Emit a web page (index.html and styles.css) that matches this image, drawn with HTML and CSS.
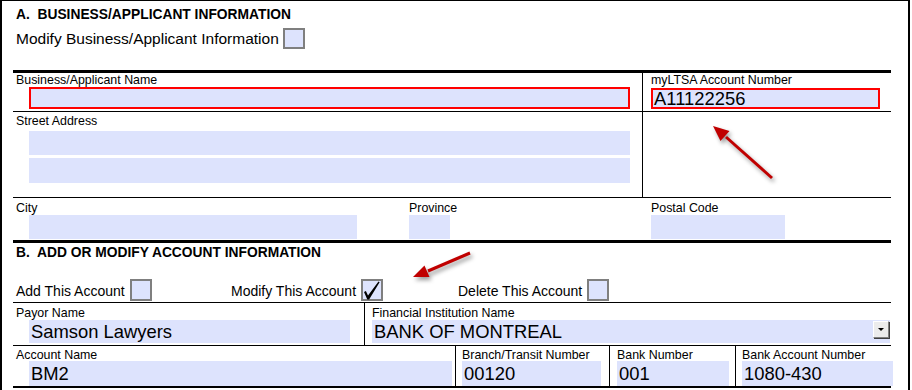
FILE: index.html
```html
<!DOCTYPE html>
<html lang="en">
<head>
    <meta charset="UTF-8">
    <meta name="viewport" content="width=device-width, initial-scale=1.0">
    <title>Account Information Form</title>
    <link rel="stylesheet" href="styles.css">
</head>
<body>

    <div class="frame">

        <!-- Section A -->
        <div class="sec-title">A.&nbsp; BUSINESS/APPLICANT INFORMATION</div>
        <div class="modify-line">
            <span>Modify Business/Applicant Information</span>
            <span class="box"></span>
        </div>

        <div class="row row-a1">
            <div class="cell cell-first div">
                <div class="lbl">Business/Applicant Name</div>
                <div class="fld req f-bizname"></div>
            </div>
            <div class="cell cell-ltsa">
                <div class="lbl">myLTSA Account Number</div>
                <div class="fld req f-ltsa">A11122256</div>
            </div>
        </div>

        <div class="row row-a2">
            <div class="cell cell-first div">
                <div class="lbl">Street Address</div>
                <div class="fld f-street1"></div>
                <div class="fld f-street2"></div>
            </div>
            <div class="cell"></div>
        </div>

        <div class="row row-a3">
            <div class="cell cell-first">
                <div class="lbl">City</div>
                <div class="fld f-city"></div>
            </div>
            <div class="cell">
                <div class="lbl">Province</div>
                <div class="fld f-prov"></div>
            </div>
            <div class="cell">
                <div class="lbl">Postal Code</div>
                <div class="fld f-postal"></div>
            </div>
        </div>

        <!-- Section B -->
        <div class="sec-b">
            <div class="sec-title">B.&nbsp; ADD OR MODIFY ACCOUNT INFORMATION</div>

            <div class="check-row">
                <div class="check-item">
                    <span>Add This Account</span>
                    <span class="box"></span>
                </div>
                <div class="check-item">
                    <span>Modify This Account</span>
                    <span class="box">
                        <svg class="tick" width="18" height="18" viewBox="0 0 18 18">
                            <path d="M1 11 L2.9 10 L5 14.6 L15.5 0.4 L16.6 1.2 L6.1 18.4 L4.3 18.4 Z"/>
                        </svg>
                    </span>
                </div>
                <div class="check-item">
                    <span>Delete This Account</span>
                    <span class="box"></span>
                </div>
            </div>

            <div class="row row-b1">
                <div class="cell cell-first div">
                    <div class="lbl">Payor Name</div>
                    <div class="fld f-payor">Samson Lawyers</div>
                </div>
                <div class="cell cell-bank">
                    <div class="lbl">Financial Institution Name</div>
                    <div class="fld combo f-bank">
                        <span>BANK OF MONTREAL</span>
                        <span class="combo-btn"><span class="caret"></span></span>
                    </div>
                </div>
            </div>

            <div class="row row-b2">
                <div class="cell cell-first div">
                    <div class="lbl">Account Name</div>
                    <div class="fld f-acct">BM2</div>
                </div>
                <div class="cell cell-branch div">
                    <div class="lbl">Branch/Transit Number</div>
                    <div class="fld f-branch">00120</div>
                </div>
                <div class="cell cell-banknum div">
                    <div class="lbl">Bank Number</div>
                    <div class="fld f-banknum">001</div>
                </div>
                <div class="cell cell-bankacct">
                    <div class="lbl">Bank Account Number</div>
                    <div class="fld f-bankacct">1080-430</div>
                </div>
            </div>
        </div>
    </div>

    <!-- callout arrows drawn over the form -->
    <svg class="arrows" width="912" height="390" viewBox="0 0 912 390">
        <g class="arrow">
            <line x1="772" y1="178" x2="726" y2="137"/>
            <polygon points="713,126 729.5,131 720.5,141"/>
        </g>
        <g class="arrow">
            <line x1="470" y1="253" x2="428" y2="271"/>
            <polygon points="413,277 429.5,277 424.5,265.5"/>
        </g>
    </svg>

</body>
</html>
```

FILE: styles.css
```css
body {
    margin: 0;
    background-color: #fff;
    font-family: "Liberation Sans", Arial, sans-serif;
    color: #000;
}
.frame {
    box-sizing: border-box;
    width: 910px;
    height: 390px;
    border: 2px solid #000;
    border-top-width: 1px;
    border-bottom: none;
    padding: 6px 17px 0 11px;
    overflow: hidden;
}
.sec-title {
    padding-left: 3px;
    font-size: 13.8px;
    font-weight: bold;
    line-height: 15px;
    white-space: nowrap;
}
.modify-line {
    display: flex;
    align-items: center;
    gap: 4px;
    height: 21px;
    margin-top: 6px;
    padding-left: 3px;
    font-size: 15.5px;
    line-height: 21px;
}
.box {
    box-sizing: border-box;
    display: block;
    flex: none;
    width: 22px;
    height: 22px;
    border: 2px solid #7f7f7f;
    background-color: #dde3fd;
}
.modify-line .box {
    height: 21px;
}
.tick {
    display: block;
    overflow: visible;
}
.tick path {
    fill: #000;
}

/* rows of cells */
.row {
    display: grid;
    border-bottom: 1px solid #000;
}
.cell {
    min-width: 0;
}
.cell.div {
    border-right: 1px solid #000;
}
.cell-first {
    padding-left: 3px;
}
.lbl {
    font-size: 12.4px;
    line-height: 12px;
    white-space: nowrap;
}
.fld {
    box-sizing: border-box;
    background-color: #dde3fd;
    padding: 1px 0 0 2px;
    font-size: 18.4px;
    white-space: nowrap;
}
.fld.req {
    border: 2px solid #f00;
    padding-left: 1px;
}

.row-a1 {
    grid-template-columns: 630px 1fr;
    border-top: 3px solid #000;
    margin-top: 21px;
}
.row-a1 .cell {
    padding-top: 1px;
    padding-bottom: 2px;
}
.cell-ltsa {
    padding-left: 8px;
}
.f-bizname {
    width: 601px;
    height: 22px;
    margin: 1px 0 0 13px;
}
.f-ltsa {
    width: 229px;
    height: 21px;
    margin-top: 2px;
    line-height: 16px;
}

.row-a2 {
    grid-template-columns: 630px 1fr;
}
.row-a2 .cell {
    padding-top: 3px;
    padding-bottom: 14px;
}
.f-street1 {
    width: 601px;
    height: 24px;
    margin: 4px 0 0 13px;
}
.f-street2 {
    width: 601px;
    height: 25px;
    margin: 3px 0 0 13px;
}

.row-a3 {
    grid-template-columns: 396px 242px 1fr;
    border-bottom: none;
}
.row-a3 .cell {
    padding-top: 4px;
    padding-bottom: 1px;
}
.f-city {
    width: 328px;
    height: 24px;
    margin: 1px 0 0 13px;
}
.f-prov {
    width: 41px;
    height: 24px;
    margin-top: 1px;
}
.f-postal {
    width: 134px;
    height: 24px;
    margin-top: 1px;
}

/* section B */
.sec-b {
    border-top: 3px solid #000;
}
.sec-b .sec-title {
    margin-top: 2px;
}
.check-row {
    display: grid;
    grid-template-columns: 215px 227px 1fr;
    height: 23px;
    margin-top: 19px;
    padding-left: 3px;
    border-bottom: 1px solid #000;
}
.check-item {
    display: flex;
    align-items: flex-start;
    gap: 5px;
    font-size: 14px;
    line-height: 24px;
    white-space: nowrap;
}

.row-b1 {
    grid-template-columns: 352px 1fr;
}
.row-b1 .cell {
    padding-top: 4px;
    padding-bottom: 2px;
}
.cell-bank {
    padding-left: 7px;
}
.f-payor {
    width: 321px;
    height: 23px;
    margin: 1px 0 0 13px;
    line-height: 22px;
}
.f-bank {
    display: flex;
    justify-content: space-between;
    align-items: flex-start;
    width: 518px;
    height: 23px;
    margin-top: 1px;
    line-height: 22px;
}
.combo-btn {
    box-sizing: border-box;
    display: flex;
    align-items: center;
    justify-content: center;
    width: 16px;
    height: 17px;
    margin-right: 1px;
    background-color: #ececec;
    border: 1px solid #808080;
    border-top-color: #fff;
    border-left-color: #fff;
    box-shadow: 1px 1px 0 #404040;
}
.caret {
    width: 0;
    height: 0;
    border-left: 3px solid transparent;
    border-right: 3px solid transparent;
    border-top: 3px solid #000;
}

.row-b2 {
    grid-template-columns: 443px 154px 126px 1fr;
    border-bottom-width: 2px;
}
.row-b2 .cell {
    padding-top: 3px;
}
.cell-branch,
.cell-bankacct {
    padding-left: 6px;
}
.cell-banknum {
    padding-left: 7px;
}
.row-b2 .fld {
    height: 25px;
    line-height: 24px;
}
.f-acct {
    width: 423px;
    margin-left: 13px;
}
.f-branch {
    width: 139px;
}
.f-banknum {
    width: 112px;
}
.f-bankacct {
    width: 151px;
}

/* callout arrows */
.arrows {
    position: absolute;
    top: 0;
    left: 0;
    pointer-events: none;
}
.arrow {
    filter: drop-shadow(2px 3px 2px rgba(0, 0, 0, 0.4));
}
.arrow line {
    stroke: #c00000;
    stroke-width: 3;
}
.arrow polygon {
    fill: #c00000;
}
```
